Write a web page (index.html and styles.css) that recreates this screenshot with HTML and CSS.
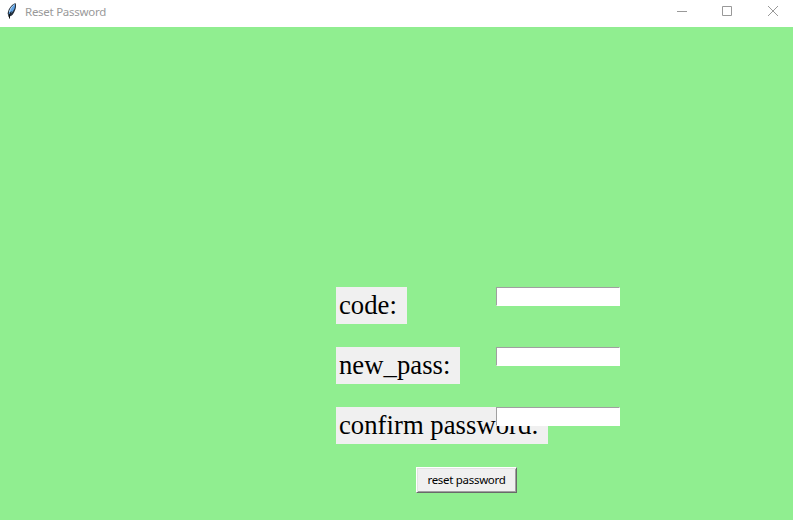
FILE: index.html
```html
<!DOCTYPE html>
<html lang="en">
<head>
<meta charset="utf-8">
<title>Reset Password</title>
<link rel="stylesheet" href="styles.css">
</head>
<body>
<header class="titlebar">
  <svg class="feather" width="12" height="18" viewBox="0 0 12 18">
    <path d="M9.7 1.2C6.5 1.5 2 6.500 1.700 11.500L2.600 15l3.200-1.500C9 10 10.800 5 9.700 1.200Z" fill="#26303c"/>
    <path d="M9 1.900C6 3.500 2.800 8 2.700 12.700 7 10.500 9.500 6 9 1.900Z" fill="#5ea2e5"/>
    <path d="M8.300 2.500C5.700 4.500 4.200 7 3.400 10" fill="none" stroke="#b9d8f2"/>
    <path d="M5.300 9.500 3.500 13V16.500" fill="none" stroke="#111"/>
  </svg>
  <span class="title">Reset Password</span>
  <svg class="controls" width="138" height="27" viewBox="0 0 138 27" fill="none" stroke="#999">
    <path d="M22 11.5h10M67.500 6.500h9v9h-9zM113 6l10 10M123 6l-10 10"/>
  </svg>
</header>
<main class="window">
  <form class="form">
    <div class="row"><label class="label code" for="code">code:</label><input class="entry" id="code"></div>
    <div class="row"><label class="label new-pass" for="new">new_pass:</label><input class="entry" id="new" type="password"></div>
    <div class="row"><label class="label confirm" for="confirm">confirm password:</label><input class="entry" id="confirm" type="password"></div>
    <button class="reset" type="button"><span>reset password</span></button>
  </form>
</main>
</body>
</html>
```
FILE: styles.css
```css
* { box-sizing: border-box; }
body { margin: 0; height: 520px; overflow: hidden; display: flex; flex-direction: column; background: #90ee90; }
.titlebar { height: 27px; flex: none; display: flex; background: #fff; }
.feather { margin: 2px 0 0 6px; }
.title { margin-left: 7px; font: 11.5px/24px "Noto Sans", sans-serif; letter-spacing: -0.27px; color: #999; }
.controls { margin-left: auto; }
.window { flex: 1; padding: 260px 0 0 336px; }
.form { display: flex; flex-direction: column; align-items: flex-start; }
.row { height: 60px; display: grid; grid-template-columns: 160px 124px; align-items: start; }
.label { height: 37px; padding-left: 3px; background: #f0f0f0; color: #000; font: 26.67px/37px "Liberation Serif", serif; letter-spacing: 0.04px; font-variant-ligatures: none; white-space: nowrap; }
.code { width: 71px; }
.new-pass { width: 124px; }
.confirm { width: 212px; }
.entry { position: relative; width: 124px; height: 19px; padding: 1px; border: 1px solid; border-color: #a0a0a0 #fff #fff #a0a0a0; border-radius: 0; background: #fff; outline: 0; font: 12px "Noto Sans", sans-serif; }
.reset { width: 101px; height: 26px; margin-left: 80px; padding: 0; border: 1px solid; border-color: #fff #696969 #696969 #fff; border-radius: 0; background: #f0f0f0; box-shadow: inset 1px 1px #e3e3e3, inset -1px -1px #a0a0a0; color: #000; font: 11.5px/22px "Noto Sans", sans-serif; letter-spacing: -0.3px; white-space: nowrap; }
```
